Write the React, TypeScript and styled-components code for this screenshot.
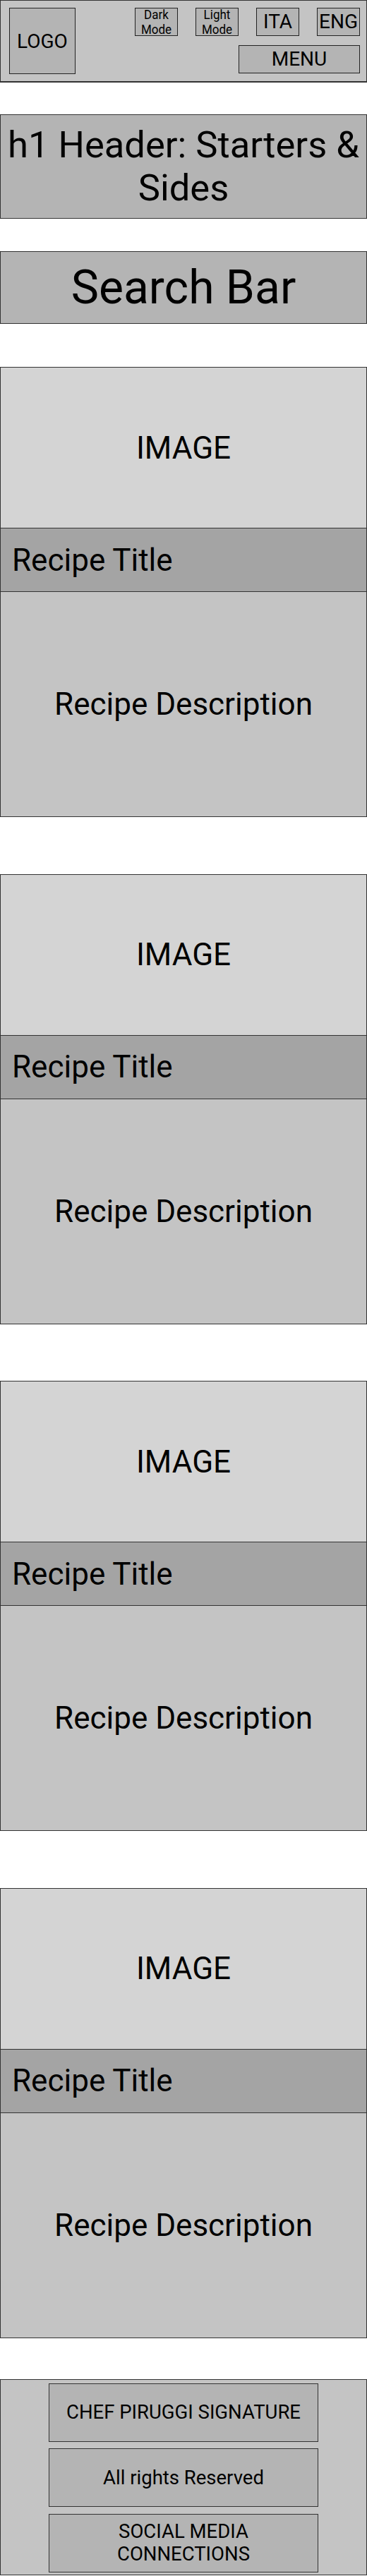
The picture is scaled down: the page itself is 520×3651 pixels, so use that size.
import React from "react";
import styled, { createGlobalStyle } from "styled-components";

const GlobalStyle = createGlobalStyle`
  html, body {
    margin: 0;
    padding: 0;
    background: #ffffff;
  }
  body {
    font-family: Roboto, "Liberation Sans", Arial, sans-serif;
    color: #000;
  }
  * { box-sizing: border-box; }
`;

const Page = styled.div`
  display: flex;
  flex-direction: column;
  width: 520px;
`;

const Header = styled.header`
  display: flex;
  justify-content: space-between;
  align-items: flex-start;
  height: 117px;
  padding: 10px 9px 0 12px;
  background: #c4c4c4;
  border: 1px solid #333;
  border-bottom-width: 2px;
`;

const Logo = styled.div`
  width: 94px;
  height: 94px;
  display: flex;
  align-items: center;
  justify-content: center;
  background: #b4b4b4;
  border: 1px solid #222;
  font-size: 28px;
`;

const Controls = styled.div`
  display: flex;
  flex-direction: column;
  align-items: flex-end;
  gap: 13px;
`;

const ButtonRow = styled.div`
  display: flex;
  gap: 25px;
`;

const HeaderButton = styled.div<{ $w?: number; $small?: boolean }>`
  width: ${(p) => p.$w ?? 61}px;
  height: 40px;
  display: flex;
  align-items: center;
  justify-content: center;
  text-align: center;
  background: #b4b4b4;
  border: 1px solid #222;
  font-size: ${(p) => (p.$small ? 17 : 28)}px;
  line-height: ${(p) => (p.$small ? "20px" : "1")};
  white-space: nowrap;
`;

const Stretch = styled.span<{ $y: number }>`
  display: inline-block;
  transform: scaleY(${(p) => p.$y});
`;

const TitleBox = styled.h1`
  margin: 45px 0 0;
  height: 148px;
  display: flex;
  align-items: center;
  justify-content: center;
  text-align: center;
  padding: 0 6px;
  background: #b4b4b4;
  border: 1.5px solid #333;
  font-size: 52.5px;
  font-weight: 400;
  line-height: 61.5px;
`;

const SearchBar = styled.div`
  margin-top: 46px;
  height: 103px;
  display: flex;
  align-items: center;
  justify-content: center;
  background: #b4b4b4;
  border: 1.5px solid #333;
  font-size: 66px;
`;

const CardList = styled.div`
  display: flex;
  flex-direction: column;
  gap: 80.5px;
  margin-top: 61px;
`;

const Card = styled.article`
  display: flex;
  flex-direction: column;
  border: 1.5px solid #333;
`;

const ImageArea = styled.div`
  height: 228px;
  display: flex;
  align-items: center;
  justify-content: center;
  background: #d4d4d4;
  border-bottom: 1.5px solid #333;
  font-size: 44px;
`;

const RecipeTitle = styled.div`
  height: 90px;
  display: flex;
  align-items: center;
  padding-left: 16px;
  background: #a4a4a4;
  border-bottom: 1.5px solid #333;
  font-size: 44px;
`;

const Description = styled.div`
  height: 318px;
  display: flex;
  align-items: center;
  justify-content: center;
  background: #c4c4c4;
  font-size: 44px;
`;

const Footer = styled.footer`
  margin-top: 58px;
  height: 278px;
  display: flex;
  flex-direction: column;
  align-items: center;
  gap: 9.5px;
  padding-top: 5px;
  background: #c4c4c4;
  border: 1.5px solid #333;
`;

const FooterBox = styled.div`
  width: 382px;
  height: 83px;
  display: flex;
  align-items: center;
  justify-content: center;
  text-align: center;
  background: #b4b4b4;
  border: 1.5px solid #333;
  font-size: 27.5px;
  line-height: 31.7px;
`;

const recipes = [1, 2, 3, 4];

export default function App() {
  return (
    <>
      <GlobalStyle />
      <Page>
        <Header>
          <Logo>LOGO</Logo>
          <Controls>
            <ButtonRow>
              <HeaderButton $small>
                <Stretch $y={1.05}>
                  Dark
                  <br />
                  Mode
                </Stretch>
              </HeaderButton>
              <HeaderButton $small>
                <Stretch $y={1.05}>
                  Light
                  <br />
                  Mode
                </Stretch>
              </HeaderButton>
              <HeaderButton>ITA</HeaderButton>
              <HeaderButton>ENG</HeaderButton>
            </ButtonRow>
            <HeaderButton $w={172}>MENU</HeaderButton>
          </Controls>
        </Header>

        <TitleBox>h1 Header: Starters &amp; Sides</TitleBox>

        <SearchBar>Search Bar</SearchBar>

        <CardList>
          {recipes.map((r) => (
            <Card key={r}>
              <ImageArea>IMAGE</ImageArea>
              <RecipeTitle>Recipe Title</RecipeTitle>
              <Description>Recipe Description</Description>
            </Card>
          ))}
        </CardList>

        <Footer>
          <FooterBox>CHEF PIRUGGI SIGNATURE</FooterBox>
          <FooterBox>All rights Reserved</FooterBox>
          <FooterBox>
            SOCIAL MEDIA
            <br />
            CONNECTIONS
          </FooterBox>
        </Footer>
      </Page>
    </>
  );
}
